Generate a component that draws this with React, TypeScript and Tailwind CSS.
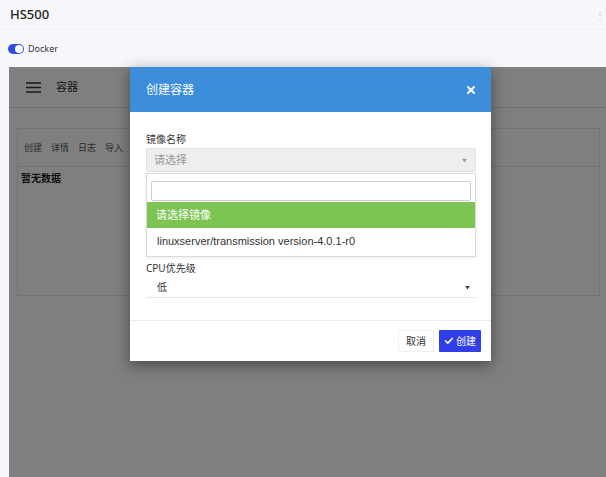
import { Check, X } from 'lucide-react';

const cjk = { fontFamily: '"Noto Sans", "Noto Sans CJK SC", sans-serif' };

function Caret({ className = '' }: { className?: string }) {
  return (
    <svg className={className} width="7" height="5" viewBox="0 0 7 5">
      <path d="M0 0h7L3.5 5z" fill="currentColor" />
    </svg>
  );
}

function Toolbar() {
  return (
    <div className="flex h-[38px] items-center gap-[9px] px-[6px] text-[9px] text-[#555] border-b border-[#e6e6e6]">
      <span>创建</span>
      <span>详情</span>
      <span>日志</span>
      <span>导入</span>
    </div>
  );
}

function CreateModal() {
  return (
    <div className="absolute left-[121px] top-0 w-[361px] h-[294px] bg-white shadow-[0_4px_14px_rgba(0,0,0,0.45)] flex flex-col">
      <div className="h-[45px] bg-[#3c8edb] flex items-center justify-between pl-[16px] pr-[14px]">
        <span className="text-white text-[12px]">创建容器</span>
        <X className="w-[12px] h-[12px] text-white" strokeWidth={4} />
      </div>

      <div className="relative flex-1 px-[16px] pr-[15px] pt-[20px]">
        <div className="text-[10px] text-[#333] leading-[15px]">镜像名称</div>
        <div className="mt-[1px] h-[24px] bg-[#eeeeee] border border-[#e3e3e3] rounded-[2px] flex items-center justify-between pl-[7px] pr-[7px]">
          <span className="text-[11px] text-[#999]">请选择</span>
          <Caret className="text-[#999] scale-75" />
        </div>

        {/* room for the field that the open list covers */}
        <div className="h-[89px]" />

        <div className="text-[10px] text-[#333] leading-[15px]">CPU优先级</div>
        <div className="mt-[1px] h-[21px] border-b border-[#e6e6e6] flex items-center justify-between pl-[11px] pr-[5px]">
          <span className="text-[10px] text-[#333]">低</span>
          <Caret className="text-[#444] scale-75" />
        </div>

        {/* open dropdown */}
        <div className="absolute left-[16px] right-[15px] top-[61px] h-[84px] bg-white border border-[#dcdcdc] shadow-[0_1px_3px_rgba(0,0,0,0.08)]">
          <div className="px-[4px] pt-[7px] pb-[1px]">
            <div className="h-[20px] border border-[#cfcfcf] rounded-[2px] bg-white" />
          </div>
          <div className="h-[26px] bg-[#7cc552] flex items-center pl-[9px] text-[11px] text-white">请选择镜像</div>
          <div
            className="h-[26px] flex items-center pl-[10px] text-[11px] text-[#333]"
            style={{ fontFamily: '"Liberation Sans", Arial, sans-serif' }}
          >
            linuxserver/transmission version-4.0.1-r0
          </div>
        </div>
      </div>

      <div className="h-[41px] border-t border-[#ececec] flex items-center justify-end gap-[5px] pr-[10px]">
        <button className="h-[22px] px-[7px] border border-[#f0f0f0] bg-white text-[10px] text-[#333] rounded-[1px]">取消</button>
        <button className="h-[22px] px-[5px] bg-[#2f3ee6] text-white text-[10px] rounded-[1px] flex items-center gap-[2px]">
          <Check className="w-[10px] h-[10px]" strokeWidth={4} />
          创建
        </button>
      </div>
    </div>
  );
}

export default function App() {
  return (
    <div className="w-[606px] h-[477px] overflow-hidden bg-[#f7f7fb] flex flex-col" style={cjk}>
      <div className="h-[30px] shrink-0 flex items-center justify-between pl-[10px] pr-[1px] border-b border-[#efeff4]">
        <span className="text-[13px] font-medium text-[#222]">HS500</span>
        <span className="text-[10px] text-[#bbb] leading-none">⋮</span>
      </div>

      <div className="h-[37px] shrink-0 flex items-center gap-[4px] pl-[8px]">
        <div className="w-[16px] h-[10px] rounded-full bg-[#2e4ee3] flex items-center justify-end pr-[1px]">
          <div className="w-[8px] h-[8px] rounded-full bg-white" />
        </div>
        <span className="text-[9px] text-[#333]">Docker</span>
      </div>

      <div className="relative flex-1 ml-[9px] bg-white">
        <div className="h-[41px] flex items-center gap-[15px] pl-[17px] border-b border-[#e0e0e0]">
          <svg width="15" height="11" viewBox="0 0 15 11">
            <path d="M0 1h15M0 5.5h15M0 10h15" stroke="#333" strokeWidth="1.3" />
          </svg>
          <span className="text-[11px] text-[#333]">容器</span>
        </div>

        <div className="mx-[8px] mt-[20px] h-[168px] border border-[#e8e8e8] mr-[6px]">
          <Toolbar />
          <div className="px-[3px] pt-[4px] text-[10px] font-bold text-[#222]">暂无数据</div>
        </div>

        <div className="absolute inset-0 bg-black/50" />
        <CreateModal />
      </div>
    </div>
  );
}
